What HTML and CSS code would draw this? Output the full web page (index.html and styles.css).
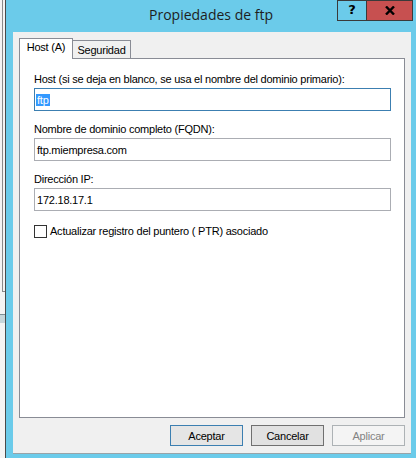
FILE: index.html
```html
<!DOCTYPE html>
<html lang="es">
<head>
<meta charset="utf-8">
<title>Propiedades de ftp</title>
<link rel="stylesheet" href="styles.css">
</head>
<body>
<div class="screen">
  <div class="behind">
    <div class="behind-frame"></div>
    <div class="behind-bar"></div>
  </div>
  <div class="window">
    <div class="titlebar">
      <div></div>
      <div class="title">Propiedades de ftp</div>
      <div class="caption-btns">
        <div class="cap-btn help">?</div>
        <div class="cap-btn close">
          <svg width="10" height="9" viewBox="0 0 10 9"><path d="M1 0.5 L9 8.5 M9 0.5 L1 8.5" stroke="#000" stroke-width="2.4" fill="none"/></svg>
        </div>
      </div>
    </div>
    <div class="client">
      <div class="tabs">
        <div class="tab active">Host (A)</div>
        <div class="tab">Seguridad</div>
      </div>
      <div class="panel">
        <div class="label">Host (si se deja en blanco, se usa el nombre del dominio primario):</div>
        <div class="field focused"><span class="sel">ftp</span></div>
        <div class="label gap">Nombre de dominio completo (FQDN):</div>
        <div class="field">ftp.miempresa.com</div>
        <div class="label gap">Dirección IP:</div>
        <div class="field">172.18.17.1</div>
        <div class="check-row">
          <span class="checkbox"></span>
          <span class="check-label">Actualizar registro del puntero ( PTR) asociado</span>
        </div>
      </div>
      <div class="buttons">
        <div class="btn default">Aceptar</div>
        <div class="btn">Cancelar</div>
        <div class="btn disabled">Aplicar</div>
      </div>
    </div>
  </div>
</div>
</body>
</html>
```

FILE: styles.css
```css
html, body {
  margin: 0;
  padding: 0;
}
body {
  width: 416px;
  height: 458px;
  overflow: hidden;
  font-family: "Liberation Sans", Arial, sans-serif;
  font-size: 11px;
  letter-spacing: -0.23px;
  color: #000;
}
.screen {
  display: flex;
  width: 416px;
  height: 458px;
}
.behind {
  width: 5px;
  background: #f4f4f4;
  display: flex;
  flex-direction: column;
}
.behind-frame {
  height: 291px;
  margin-left: 2px;
  border-left: 1px solid #8a8a8a;
  border-bottom: 1px solid #8a8a8a;
}
.behind-bar {
  margin-top: 22px;
  height: 8px;
  background: #c6d6db;
  border-top: 1px solid #7d8f96;
}
.window {
  flex: 1;
  border-left: 1px solid #4a4a4a;
  background: #6bcbea;
  display: flex;
  flex-direction: column;
  padding-bottom: 4px;
}
.titlebar {
  height: 32px;
  display: grid;
  grid-template-columns: 1fr auto 1fr;
}
.title {
  font-family: "Open Sans", "Noto Sans", sans-serif;
  font-size: 14px;
  letter-spacing: 0;
  color: #1e1e1e;
  line-height: 30px;
}
.caption-btns {
  justify-self: end;
  align-self: start;
  display: flex;
  margin-right: 3px;
}
.cap-btn {
  height: 21px;
  box-sizing: border-box;
  border: 1px solid #3a3a3a;
  display: flex;
  align-items: center;
  justify-content: center;
}
.help {
  width: 29px;
  border-right: none;
  font-weight: bold;
  font-size: 13px;
  letter-spacing: 0;
  font-family: "DejaVu Sans", sans-serif;
  color: #000;
  padding-bottom: 2px;
}
.close {
  width: 47px;
  background: #c75050;
  padding-bottom: 1px;
}
.client {
  flex: 1;
  margin: 0 5px 0 7px;
  background: #f0f0f0;
  border-bottom: 1px solid #98a3a8;
  padding: 6px 6px 7px 6px;
  display: flex;
  flex-direction: column;
}
.tabs {
  display: flex;
  align-items: flex-end;
  height: 20px;
}
.tab {
  box-sizing: border-box;
  height: 18px;
  border: 1px solid #898c95;
  border-bottom: none;
  background: #f0f0f0;
  text-align: center;
  line-height: 16px;
}
.tab.active {
  width: 54px;
  height: 21px;
  margin-bottom: -1px;
  background: #fff;
  position: relative;
  z-index: 1;
  line-height: 17px;
}
.tab:not(.active) {
  width: 59px;
  margin-left: -1px;
  padding-top: 1px;
}
.panel {
  height: 360px;
  box-sizing: border-box;
  border: 1px solid #898c95;
  background: #fff;
  padding: 13px 13px 0 14px;
}
.label {
  line-height: 14px;
  height: 14px;
  margin-bottom: 2px;
  white-space: nowrap;
}
.label.gap {
  margin-top: 11px;
}
.field {
  box-sizing: border-box;
  height: 23px;
  border: 1px solid #abadb3;
  padding-left: 2px;
  display: flex;
  align-items: center;
  line-height: 14px;
}
.field.focused {
  border-color: #3c7fb1;
  padding-left: 1px;
}
.sel {
  background: #3399ff;
  color: #fff;
  line-height: 12px;
  padding: 0 1px;
}
.check-row {
  margin-top: 13px;
  display: flex;
  align-items: center;
}
.checkbox {
  width: 13px;
  height: 13px;
  box-sizing: border-box;
  border: 1px solid #333;
  background: #fff;
}
.check-label {
  margin-left: 3px;
  line-height: 14px;
}
.buttons {
  margin-top: 7px;
  display: flex;
  justify-content: flex-end;
  gap: 8px;
}
.btn {
  width: 73px;
  height: 21px;
  box-sizing: border-box;
  border: 1px solid #707070;
  background: #e1e1e1;
  display: flex;
  align-items: center;
  justify-content: center;
}
.btn.default {
  border-color: #3c7fb1;
  background: #e5e5e5;
}
.btn.disabled {
  border-color: #adb2b5;
  background: #f4f4f4;
  color: #838383;
}
```
